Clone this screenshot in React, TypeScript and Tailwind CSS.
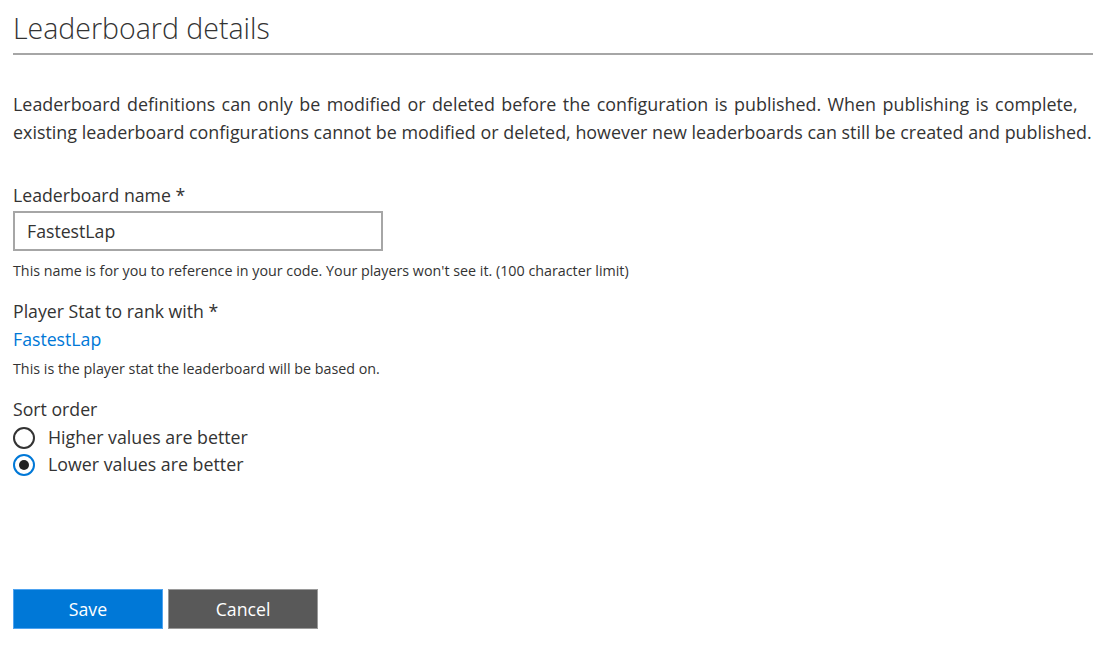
const font = { fontFamily: '"Open Sans", "Noto Sans", sans-serif' }

const Radio = ({ checked, label }: { checked: boolean; label: string }) => (
  <label className="flex h-[27px] items-center">
    <span
      className={
        checked
          ? 'flex h-[22px] w-[22px] items-center justify-center rounded-full border-2 border-[#0078d7] bg-white'
          : 'flex h-[22px] w-[22px] items-center justify-center rounded-full border-2 border-[#333333] bg-white'
      }
    >
      {checked && <span className="h-[10px] w-[10px] rounded-full bg-[#222222]" />}
    </span>
    <span className="ml-[13px] text-[17.8px] text-[#333333]">{label}</span>
  </label>
)

export default function App() {
  return (
    <div className="h-[655px] w-[1104px] bg-white px-[13px] text-[#333333]" style={font}>
      <h1 className="pt-[10px] text-[28.5px] font-light leading-[36px] text-[#333333]">
        Leaderboard details
      </h1>
      <div className="mt-[7px] mr-[-2px] h-[2px] bg-[#a6a6a6]" />

      <p className="mt-[35px] whitespace-nowrap text-[17.9px] leading-[28px]">
        <span className="[word-spacing:1.8px]">
          Leaderboard definitions can only be modified or deleted before the configuration is published. When publishing is complete,
        </span>
        <br />
        existing leaderboard configurations cannot be modified or deleted, however new leaderboards can still be created and published.
      </p>

      <div className="mt-[37px] text-[17.7px] leading-[24px]">Leaderboard name *</div>
      <div className="mt-[4px] flex h-[40px] w-[370px] items-center border-2 border-[#a6a6a6] px-[12px] text-[17.7px]">
        FastestLap
      </div>
      <div className="mt-[10px] text-[14.3px] leading-[20px]">
        This name is for you to reference in your code. Your players won't see it. (100 character limit)
      </div>

      <div className="mt-[18px] text-[17.7px] leading-[24px]">Player Stat to rank with *</div>
      <div className="mt-[4px] text-[17.7px] leading-[24px] text-[#0078d7]">FastestLap</div>
      <div className="mt-[8px] text-[14.3px] leading-[20px]">This is the player stat the leaderboard will be based on.</div>

      <div className="mt-[18px] text-[17.7px] leading-[24px]">Sort order</div>
      <div className="mt-[3px] flex flex-col">
        <Radio checked={false} label="Higher values are better" />
        <Radio checked={true} label="Lower values are better" />
      </div>

      <div className="mt-[111px] flex gap-[5px]">
        <button className="h-[40px] w-[150px] border border-[#4ea3f0] bg-[#0078d7] text-[17.7px] text-white">
          Save
        </button>
        <button className="h-[40px] w-[150px] border border-[#9a9a9a] bg-[#595959] text-[17.7px] text-white">
          Cancel
        </button>
      </div>
    </div>
  )
}
